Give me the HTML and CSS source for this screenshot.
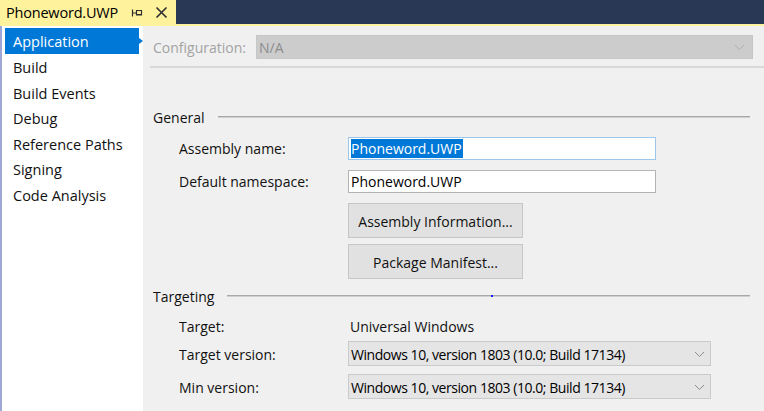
FILE: index.html
```html
<!DOCTYPE html>
<html>
<head>
<meta charset="utf-8">
<link rel="stylesheet" href="styles.css">
</head>
<body>
<div class="window">
  <div class="tabbar">
    <div class="tab">
      <span class="tab-title">Phoneword.UWP</span>
      <svg class="pin" width="12" height="10" viewBox="0 0 12 10"><path d="M1.5 1.5V8.5M1.5 5H5M5.5 2.5H10.5V7H5.5ZM5.5 6.5H10.5" fill="none" stroke="#2d2d2d" stroke-width="1.2"/></svg>
      <svg class="close" width="13" height="13" viewBox="0 0 13 13"><path d="M1.5 1.5L11.5 11.5M11.5 1.5L1.5 11.5" stroke="#2d2d2d" stroke-width="1.6"/></svg>
    </div>
  </div>
  <div class="accent"></div>
  <div class="content">
    <nav class="sidebar">
      <div class="nav-item selected">Application</div>
      <div class="nav-item">Build</div>
      <div class="nav-item">Build Events</div>
      <div class="nav-item">Debug</div>
      <div class="nav-item">Reference Paths</div>
      <div class="nav-item">Signing</div>
      <div class="nav-item">Code Analysis</div>
    </nav>
    <main class="main">
      <div class="config-row">
        <span class="config-label">Configuration:</span>
        <div class="config-select">
          <span>N/A</span>
          <svg class="chev" width="11" height="7" viewBox="0 0 11 7"><path d="M1 1L5.5 5.5L10 1" fill="none" stroke="#b0b0b0" stroke-width="1"/></svg>
        </div>
      </div>
      <div class="separator"></div>

      <div class="section-head general">
        <span>General</span>
        <div class="rule"></div>
      </div>
      <div class="form">
        <label class="lbl">Assembly name:</label>
        <div class="input focused"><span class="sel">Phoneword.UWP</span></div>
        <label class="lbl">Default namespace:</label>
        <div class="input">Phoneword.UWP</div>
        <div></div>
        <div class="buttons">
          <div class="btn">Assembly Information...</div>
          <div class="btn">Package Manifest...</div>
        </div>
      </div>

      <div class="section-head targeting">
        <span>Targeting</span>
        <div class="rule"><i class="dot"></i></div>
      </div>
      <div class="form target-form">
        <label class="lbl">Target:</label>
        <div class="value">Universal Windows</div>
        <label class="lbl">Target version:</label>
        <div class="dropdown">
          <span>Windows 10, version 1803 (10.0; Build 17134)</span>
          <svg class="chev" width="11" height="7" viewBox="0 0 11 7"><path d="M1 1L5.5 5.5L10 1" fill="none" stroke="#8a8a8a" stroke-width="1"/></svg>
        </div>
        <label class="lbl">Min version:</label>
        <div class="dropdown">
          <span>Windows 10, version 1803 (10.0; Build 17134)</span>
          <svg class="chev" width="11" height="7" viewBox="0 0 11 7"><path d="M1 1L5.5 5.5L10 1" fill="none" stroke="#8a8a8a" stroke-width="1"/></svg>
        </div>
      </div>
    </main>
  </div>
</div>
</body>
</html>
```

FILE: styles.css
```css
* { box-sizing: border-box; }
html, body { margin: 0; padding: 0; }
body {
  width: 764px;
  height: 411px;
  overflow: hidden;
  font-family: "Open Sans", "Noto Sans", "Liberation Sans", sans-serif;
  font-size: 14px;
  color: #111;
  background: #f0f0f0;
}
.window { display: flex; flex-direction: column; height: 411px; }

.tabbar {
  height: 24px;
  background: #293955;
  display: flex;
  flex: none;
}
.tab {
  width: 176px;
  background: #fff29d;
  display: flex;
  align-items: center;
  padding-left: 6px;
}
.tab-title { font-size: 14.5px; color: #000; letter-spacing: -0.2px; }
.pin { margin-left: 13px; margin-top: 1px; }
.close { margin-left: 12px; }

.accent { height: 2px; background: #fff29d; flex: none; }

.content { display: flex; flex: 1; min-height: 0; }

.sidebar {
  width: 143px;
  flex: none;
  background: #ffffff;
  border-left: 2px solid #9ea7d6;
  padding-top: 2px;
  padding-left: 3px;
  padding-right: 4px;
}
.nav-item {
  height: 25.5px;
  line-height: 27px;
  padding-left: 8px;
  font-size: 14.5px;
  color: #111;
  position: relative;
}
.nav-item.selected {
  background: #0078d7;
  color: #ffffff;
  height: 26px;
}
.nav-item.selected::after {
  content: "";
  position: absolute;
  right: -4px;
  top: 10px;
  border-left: 4px solid #0078d7;
  border-top: 3px solid transparent;
  border-bottom: 3px solid transparent;
}

.main {
  flex: 1;
  background: #f0f0f0;
  padding: 9px 11px 0 10px;
}

.config-row { display: flex; align-items: center; height: 24px; }
.config-label { width: 103px; color: #a3a3a3; padding-top: 1px; }
.config-select {
  flex: 1;
  height: 24px;
  background: #cccccc;
  border: 1px solid #c6c6c6;
  color: #8d8d8d;
  display: flex;
  align-items: center;
  justify-content: space-between;
  padding: 1px 7px 0 2px;
}

.separator {
  height: 2px;
  background: #d8d8d8;
  margin: 7px -11px 0 -3px;
}

.section-head {
  display: flex;
  align-items: center;
  height: 20px;
  margin-right: 3px;
}
.section-head .rule {
  flex: 1;
  height: 2px;
  background: #a9a9a9;
  border-bottom: 1px solid #d0d0d0;
  position: relative;
  margin-top: -1px;
}
.general { margin-top: 39px; }
.general .rule { margin-left: 13px; }
.targeting { margin-top: 7px; }
.targeting .rule { margin-left: 13px; }
.dot {
  position: absolute;
  left: 264px;
  top: 0;
  width: 2px;
  height: 2px;
  background: #1a1aff;
}

.form {
  display: grid;
  grid-template-columns: 169px auto;
  align-items: center;
  margin-left: 26px;
  margin-top: 10px;
  row-gap: 10px;
}
.lbl { color: #111; }
.input {
  width: 308px;
  height: 23px;
  background: #ffffff;
  border: 1px solid #b4b4b4;
  padding-left: 2px;
  line-height: 21px;
  color: #000;
}
.input.focused { border-color: #9cc7ec; }
.sel { background: #0078d7; color: #ffffff; padding-right: 1px; }

.buttons { display: flex; flex-direction: column; gap: 6px; }
.btn {
  width: 175px;
  height: 35px;
  background: #e1e1e1;
  border: 1px solid #c6c6c6;
  display: flex;
  align-items: center;
  justify-content: center;
  color: #111;
  padding-top: 1px;
}

.target-form { row-gap: 0; }
.target-form .lbl, .target-form .value { height: 20px; line-height: 21px; }
.value { padding-left: 2px; }
.dropdown {
  width: 363px;
  height: 25px;
  background: #e5e5e5;
  border: 1px solid #cacaca;
  display: flex;
  align-items: center;
  justify-content: space-between;
  padding: 1px 5px 0 2px;
  color: #000;
}
.dropdown span { letter-spacing: -0.45px; }
.target-form .lbl:nth-of-type(2), .target-form .dropdown:nth-of-type(2) { margin-top: 5px; }
.target-form .lbl:nth-of-type(3), .target-form .dropdown:nth-of-type(3) { margin-top: 8px; }
```
